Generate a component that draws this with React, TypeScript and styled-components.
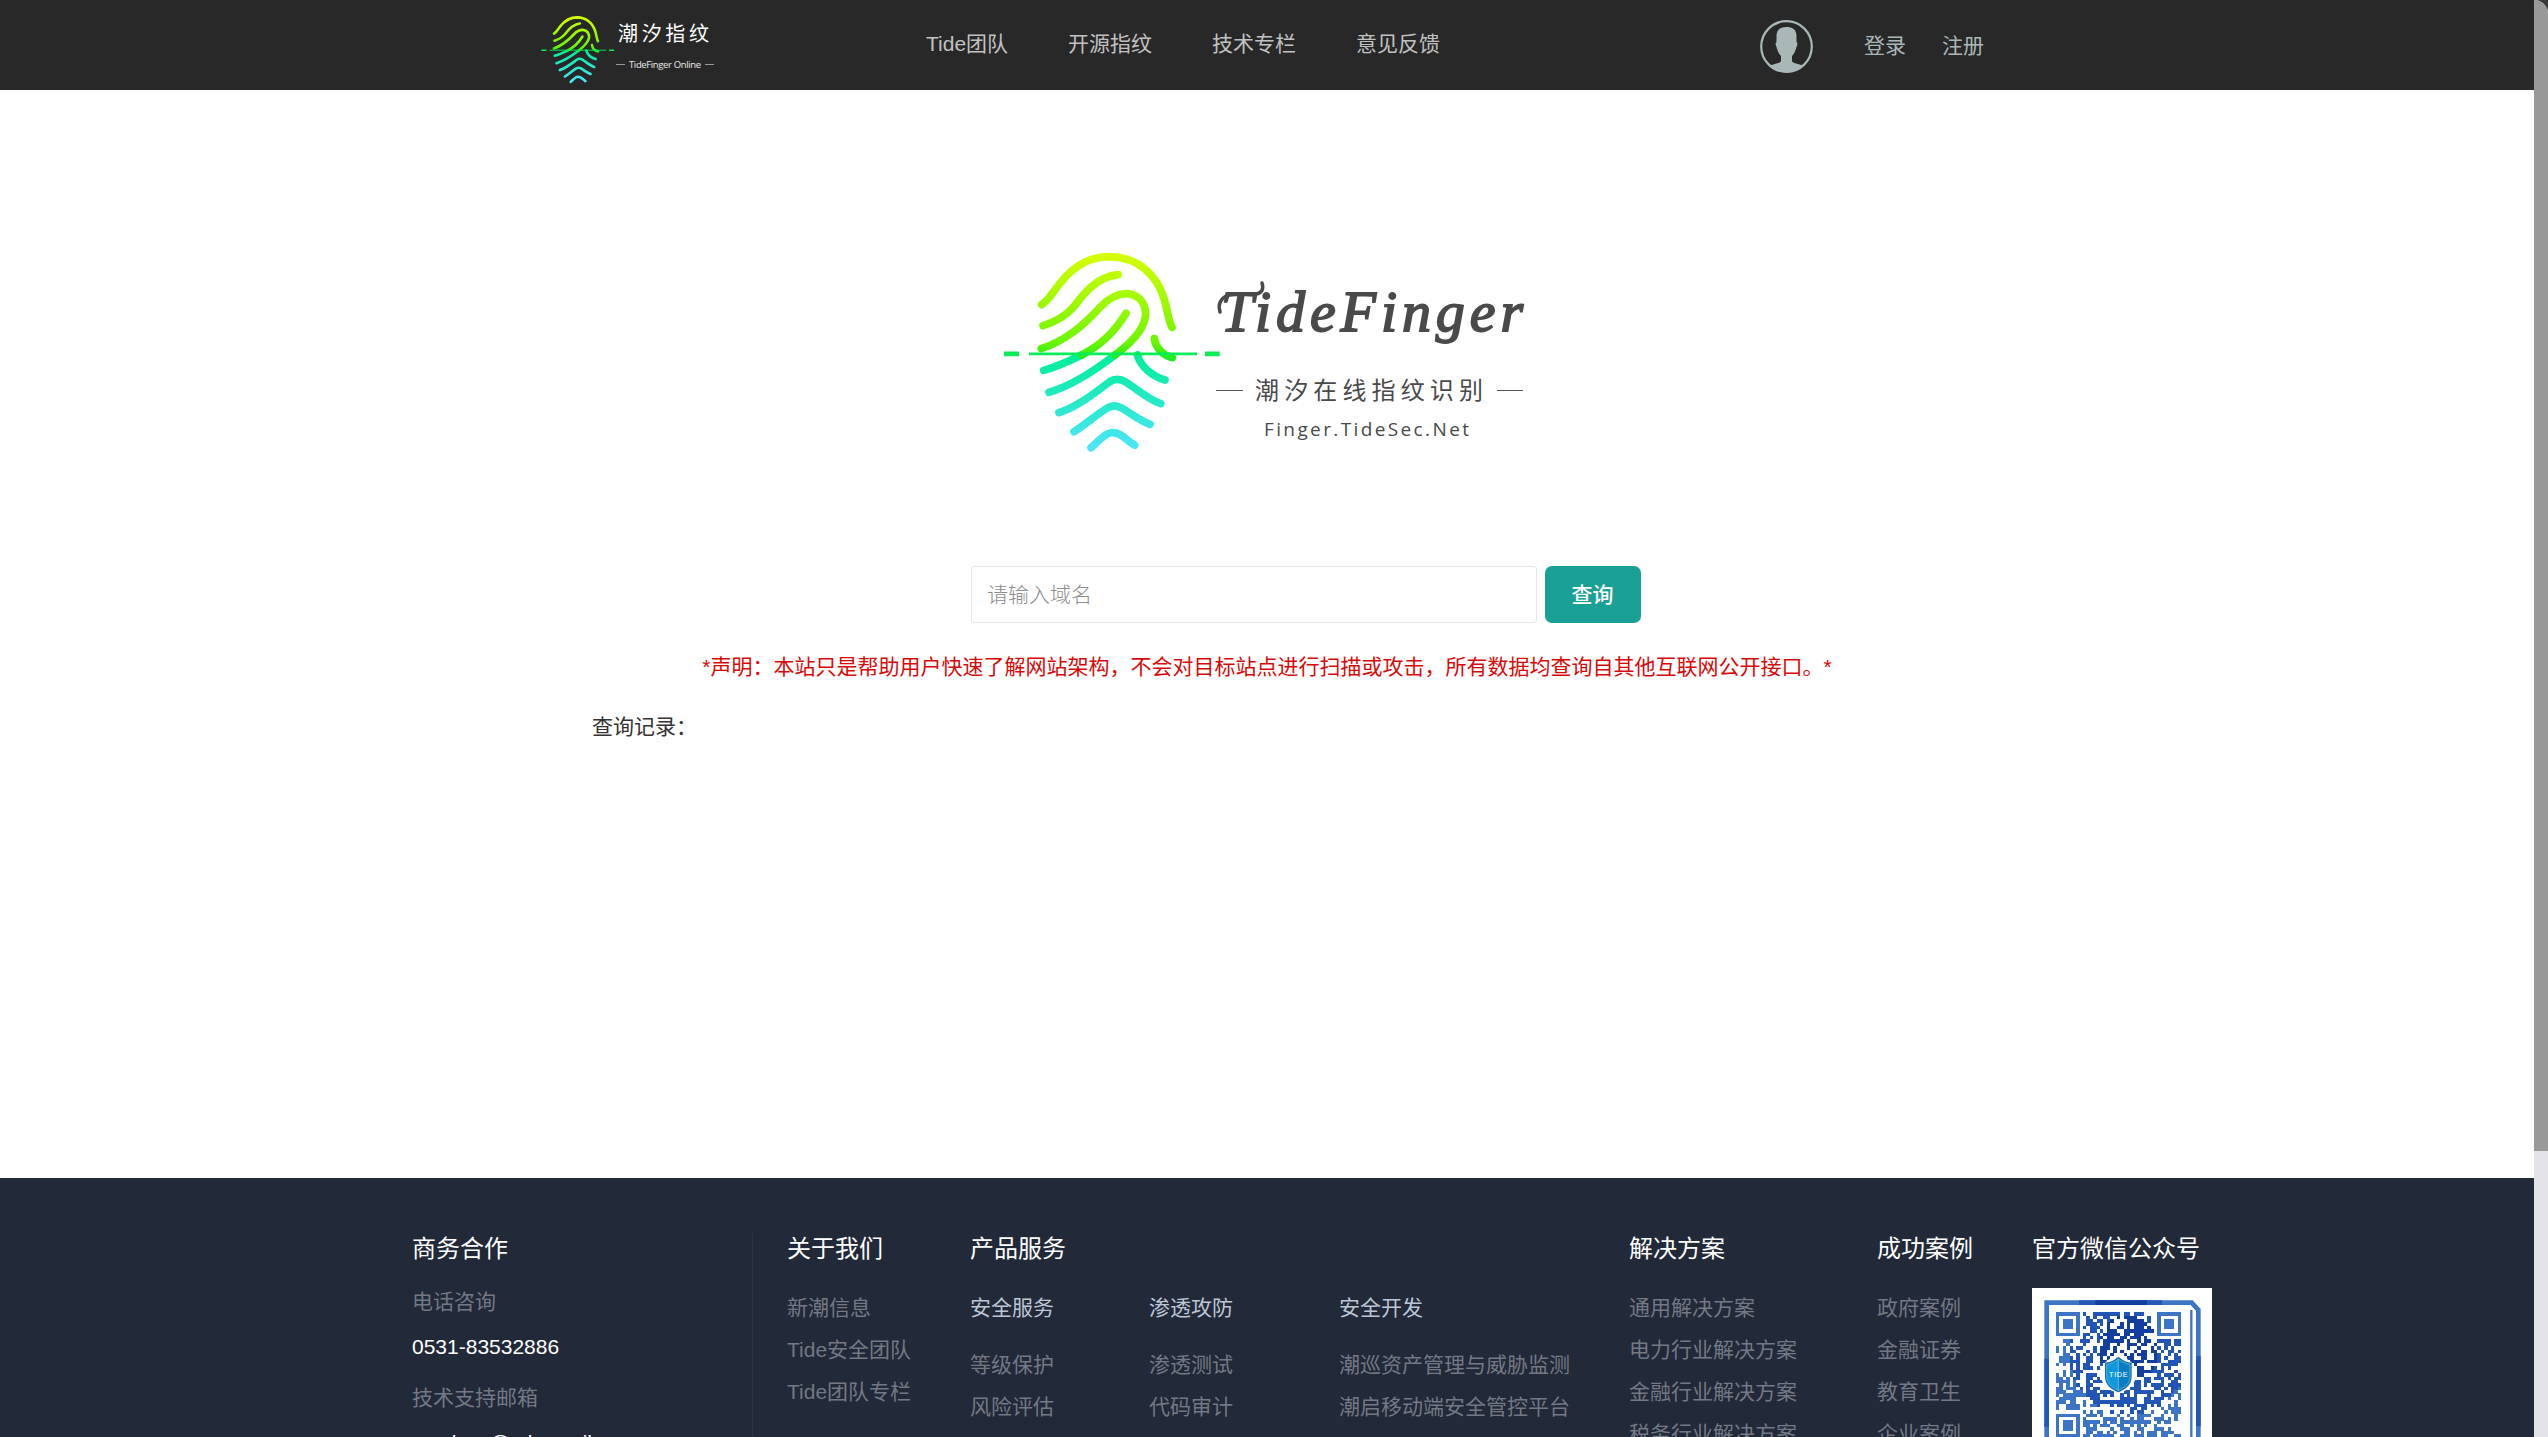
import React from "react";
import styled, { createGlobalStyle } from "styled-components";

const GlobalStyle = createGlobalStyle`
  *, *::before, *::after { box-sizing: border-box; }
  html, body { margin: 0; padding: 0; overflow: hidden; background: #3a3a3a; }
  body {
    font-family: "Liberation Sans", Arial, "Noto Sans CJK SC", sans-serif;
    font-size: 21px;
    color: #333;
  }
  h3, h4, p, ul { margin: 0; padding: 0; font-weight: 400; }
  ul { list-style: none; }
  a { color: inherit; text-decoration: none; }
`;

const Window = styled.div`
  display: flex;
  width: 2548px;
  height: 1437px;
  overflow: hidden;
`;

const Page = styled.div`
  display: flex;
  flex-direction: column;
  width: 2534px;
  height: 100%;
  background: #fff;
`;

const ScrollTrack = styled.div`
  width: 14px;
  height: 100%;
  background: #e3e3e8;
  border-top-right-radius: 14px;
  overflow: hidden;
`;

const ScrollThumb = styled.div`
  height: 1151px;
  background: #999;
`;

const Header = styled.header`
  display: flex;
  align-items: center;
  flex: none;
  height: 90px;
  padding-left: 540px;
  background: #282828;
`;

const HeaderLogo = styled.a`
  display: block;
  width: 178px;
  height: 90px;
  svg { display: block; }
`;

const Nav = styled.nav`
  display: flex;
  gap: 60px;
  margin-left: 208px;
  height: 90px;
  line-height: 88px;
  color: #c1c1c1;
`;

const Account = styled.div`
  display: flex;
  align-items: center;
  height: 90px;
  margin-left: 320px;
  line-height: 94px;
  color: #a9b7b7;
  svg { display: block; margin-right: 51px; margin-top: 2px; }
  a { padding-top: 2px; line-height: 90px; }
  a + a { margin-left: 36px; }
`;

const Main = styled.main`
  flex: none;
  height: 1088px;
  padding-top: 140px;
`;

const HeroLogo = styled.div`
  width: 580px;
  height: 240px;
  margin-left: 980px;
  svg { display: block; }
`;

const SearchForm = styled.form`
  display: flex;
  gap: 8px;
  margin: 96px 0 0 971px;
`;

const SearchInput = styled.input`
  width: 566px;
  height: 57px;
  padding: 1px 15px 0;
  border: 1px solid #e6e6e6;
  border-radius: 3px;
  background: #fff;
  font: inherit;
  outline: none;
  &::placeholder { color: #8c8c8c; opacity: 1; font-weight: 300; }
`;

const SearchButton = styled.button`
  width: 96px;
  height: 57px;
  padding: 0 1px 3px 0;
  border: 0;
  border-radius: 7px;
  background: #1aa094;
  color: #fff;
  font: inherit;
  font-weight: 500;
`;

const Notice = styled.p`
  margin-top: 29px;
  line-height: 30px;
  text-align: center;
  color: #d90808;
`;

const HistoryTitle = styled.p`
  margin: 30px 0 0 592px;
  line-height: 30px;
  color: #333;
`;

const Footer = styled.footer`
  display: flex;
  flex: 1;
  min-height: 0;
  overflow: hidden;
  padding: 55px 0 0 412px;
  background: #222938;
`;

const Contact = styled.section`
  width: 341px;
  height: 260px;
  flex: none;
  border-right: 1px solid #2f3544;
`;

const Column = styled.section<{ $w: number; $gap?: number }>`
  flex: none;
  width: ${(p) => p.$w}px;
  margin-left: ${(p) => p.$gap ?? 0}px;
`;

const ColumnTitle = styled.h3`
  height: 32px;
  line-height: 32px;
  font-size: 24px;
  color: #fff;
  white-space: nowrap;
`;

const ContactLabel = styled.p<{ $top: number }>`
  margin-top: ${(p) => p.$top}px;
  line-height: 30px;
  color: #737884;
`;

const ContactValue = styled.p`
  margin-top: 15px;
  line-height: 30px;
  color: #fff;
`;

const LinkList = styled.ul<{ $top: number }>`
  margin-top: ${(p) => p.$top}px;
  line-height: 42px;
  color: #737884;
  white-space: nowrap;
`;

const Services = styled.div`
  display: grid;
  grid-template-columns: 179px 190px 260px;
  margin-top: 22px;
`;

const ServiceTitle = styled.h4`
  line-height: 42px;
  color: #bcc6d5;
`;

const QrCard = styled.div`
  width: 180px;
  height: 180px;
  margin-top: 23px;
  background: #fff;
  svg { display: block; }
`;

const upperRidges = [
  "M185 224 C212 205 215 190 240 160 C290 96 340 80 392 80 C475 82 530 135 552 205 C562 238 566 275 576 292",
  "M189 287 C225 276 260 255 280 232 C310 192 350 140 414 134",
  "M184 356 C260 330 310 286 360 232 C390 200 415 190 442 191 C482 195 500 225 496 262 C488 305 450 340 405 375",
  "M438 250 C405 305 365 345 305 375",
  "M523 326 C526 350 545 375 577 383",
];
const lowerRidges = [
  "M305 375 C270 392 225 412 191 421",
  "M405 375 C340 425 265 470 207 487",
  "M472 375 C482 410 515 438 555 450",
  "M237 548 C300 526 350 484 388 456 Q411 440 437 456 C475 480 505 508 542 521",
  "M282 605 C325 577 350 553 382 534 Q403 521 425 534 C455 552 480 572 510 583",
  "M333 653 C350 638 362 624 378 614 Q398 602 420 614 C435 622 448 636 464 646",
];

function FingerprintMark({ id }: { id: string }) {
  return (
    <g fill="none" strokeLinecap="round" strokeWidth="23">
      <defs>
        <linearGradient id={id + "a"} gradientUnits="userSpaceOnUse" x1="0" y1="70" x2="0" y2="385">
          <stop offset="0" stopColor="#d8ff00" />
          <stop offset="0.85" stopColor="#6cf500" />
          <stop offset="1" stopColor="#1aef20" />
        </linearGradient>
        <linearGradient id={id + "b"} gradientUnits="userSpaceOnUse" x1="0" y1="375" x2="0" y2="655">
          <stop offset="0" stopColor="#00ee98" />
          <stop offset="1" stopColor="#4be6fa" />
        </linearGradient>
      </defs>
      {lowerRidges.map((d) => <path key={d} d={d} stroke={`url(#${id}b)`} />)}
      {upperRidges.map((d) => <path key={d} d={d} stroke={`url(#${id}a)`} />)}
      <path d="M147 371.500H651" stroke="#08ec5a" strokeWidth="8" strokeLinecap="butt" />
      <path d="M72 371.500H117M675 371.500H719" stroke="#08ec5a" strokeWidth="14" strokeLinecap="butt" />
    </g>
  );
}

function SmallLogo() {
  return (
    <svg width="178" height="90" viewBox="0 0 178 90">
      <g transform="translate(-6.800 8.400) scale(0.1125)">
        <FingerprintMark id="s" />
      </g>
      <g fill="#fff" fontFamily='"Noto Sans CJK SC", sans-serif'>
        <text x="78" y="41" fontSize="20" textLength="91">潮汐指纹</text>
        <text x="89" y="68" fontSize="9.500" fontFamily='"Open Sans", sans-serif' textLength="72" fill="#e8e8e8">TideFinger Online</text>
      </g>
      <path d="M76 64.500h9M165 64.500h9" stroke="#999" />
    </svg>
  );
}

function BigLogo() {
  return (
    <svg width="580" height="240" viewBox="0 0 580 240">
      <g transform="scale(0.33333)">
        <FingerprintMark id="h" />
      </g>
      <g fill="#4a4a4a">
        <text x="241" y="100.500" stroke="#4a4a4a" strokeWidth="1.800" fontFamily='"Liberation Serif", serif' fontStyle="italic" fontSize="58" textLength="302">TideFinger</text>
        <path d="M254 64 C243 65 237 72 240 82 M276 64 C282 63 284 59 282 53" fill="none" stroke="#4a4a4a" strokeWidth="3.500" strokeLinecap="round" />
        <text x="275" y="169" fontFamily='"Noto Sans CJK SC", sans-serif' fontSize="24" textLength="228">潮汐在线指纹识别</text>
        <text x="284" y="206" fontFamily='"Open Sans", sans-serif' fontSize="19" textLength="205">Finger.TideSec.Net</text>
      </g>
      <path d="M236 160.500h27M517 160.500h26" stroke="#555" />
    </svg>
  );
}

function Avatar() {
  return (
    <svg width="53" height="53" viewBox="0 0 53 53">
      <defs>
        <clipPath id="avatarClip"><circle cx="26.500" cy="26.500" r="26" /></clipPath>
      </defs>
      <circle cx="26.500" cy="26.500" r="25.300" fill="none" stroke="#a9b7b7" strokeWidth="2.200" />
      <path
        clipPath="url(#avatarClip)"
        fill="#a9b7b7"
        d="M16.500 16 C16.500 9 21 7 26.500 7 C32 7 36.500 9 36.500 16 V22 C38 23 37.500 25 36.500 27 C35.500 31 34 34 32 36 V41 C33 44 40 43 44 47 V53 H9 V47 C13 43 20 44 21 41 V36 C19 34 17.500 31 16.500 27 C15.500 25 15 23 16.500 22 Z"
      />
    </svg>
  );
}

const QR_SIZE = 37;
const finders = [[0, 0], [30, 0], [0, 30]];

function moduleColor(x: number, y: number) {
  const d = Math.hypot(x - 21, (y - 10) * 0.9);
  if (d < 9) return "#123f9f";
  if (d < 18) return "#2155b6";
  return "#3c74c6";
}

function buildModules() {
  const cells: { x: number; y: number }[] = [];
  let seed = 20197;
  for (let y = 0; y < QR_SIZE; y++) {
    for (let x = 0; x < QR_SIZE; x++) {
      seed = (seed * 1103515245 + 12345) % 2147483648;
      const on = seed / 2147483648 < 0.53;
      const inFinder = finders.some(([fx, fy]) => x >= fx - 1 && x <= fx + 7 && y >= fy - 1 && y <= fy + 7);
      const inBadge = Math.hypot(x - 18, y - 18) < 5.2;
      if (on && !inFinder && !inBadge) cells.push({ x, y });
    }
  }
  return cells;
}

function QrCode() {
  return (
    <svg width="180" height="180" viewBox="0 0 540 540">
      <path d="M44 540V44H479L499 66V540" fill="none" stroke="#3c74c6" strokeWidth="14" />
      <path d="M141 44H390" stroke="#2358b8" strokeWidth="14" />
      <path d="M190 44H345" stroke="#123f9f" strokeWidth="14" />
      <path d="M44 212V416M499 205V415" stroke="#2155b6" strokeWidth="14" />
      <path d="M478 66V540" stroke="#3c74c6" strokeWidth="7" />
      <g transform="translate(72 73) scale(10.140)" shapeRendering="crispEdges">
        {buildModules().map(({ x, y }) => (
          <rect key={x + "-" + y} x={x} y={y} width="1.020" height="1.020" fill={moduleColor(x, y)} />
        ))}
        {finders.map(([x, y]) => (
          <g key={x + "f" + y}>
            <rect x={x + 0.5} y={y + 0.5} width="6" height="6" fill="none" stroke="#3c74c6" />
            <rect x={x + 2} y={y + 2} width="3" height="3" fill="#3c74c6" />
          </g>
        ))}
      </g>
      <circle cx="259" cy="259" r="53" fill="#fff" />
      <path d="M259 206C246 218 232 223 219 224V266C219 290 238 304 259 313C280 304 299 290 299 266V224C286 223 272 218 259 206Z" fill="#0d6fae" />
      <path d="M259 213C248 222 236 228 224 229V266C224 287 241 299 259 307Z" fill="#1098da" stroke="#7cc4ea" strokeWidth="2" />
      <path d="M259 213C270 222 282 228 294 229V266C294 287 277 299 259 307Z" fill="#0a7ec2" stroke="#7cc4ea" strokeWidth="2" />
      <text x="259" y="267" textAnchor="middle" fontFamily='"Liberation Sans", sans-serif' fontSize="22" textLength="56" fill="#fff">TIDE</text>
    </svg>
  );
}

const navItems = ["Tide团队", "开源指纹", "技术专栏", "意见反馈"];
const services = [
  { title: "安全服务", items: ["等级保护", "风险评估"] },
  { title: "渗透攻防", items: ["渗透测试", "代码审计"] },
  { title: "安全开发", items: ["潮巡资产管理与威胁监测", "潮启移动端安全管控平台"] },
];

function Links({ items, top }: { items: string[]; top: number }) {
  return (
    <LinkList $top={top}>
      {items.map((t) => <li key={t}><a>{t}</a></li>)}
    </LinkList>
  );
}

export default function App() {
  return (
    <Window>
      <GlobalStyle />
      <Page>
        <Header>
          <HeaderLogo><SmallLogo /></HeaderLogo>
          <Nav>{navItems.map((t) => <a key={t}>{t}</a>)}</Nav>
          <Account>
            <Avatar />
            <a>登录</a>
            <a>注册</a>
          </Account>
        </Header>
        <Main>
          <HeroLogo><BigLogo /></HeroLogo>
          <SearchForm>
            <SearchInput placeholder="请输入域名" />
            <SearchButton type="button">查询</SearchButton>
          </SearchForm>
          <Notice>*声明：本站只是帮助用户快速了解网站架构，不会对目标站点进行扫描或攻击，所有数据均查询自其他互联网公开接口。*</Notice>
          <HistoryTitle>查询记录：</HistoryTitle>
        </Main>
        <Footer>
          <Contact>
            <ColumnTitle>商务合作</ColumnTitle>
            <ContactLabel $top={22}>电话咨询</ContactLabel>
            <ContactValue>0531-83532886</ContactValue>
            <ContactLabel $top={21}>技术支持邮箱</ContactLabel>
            <ContactValue>secdesc@sdxcmail.com</ContactValue>
          </Contact>
          <Column $w={183} $gap={34}>
            <ColumnTitle>关于我们</ColumnTitle>
            <Links top={22} items={["新潮信息", "Tide安全团队", "Tide团队专栏"]} />
          </Column>
          <Column $w={659}>
            <ColumnTitle>产品服务</ColumnTitle>
            <Services>
              {services.map((s) => (
                <div key={s.title}>
                  <ServiceTitle>{s.title}</ServiceTitle>
                  <Links top={15} items={s.items} />
                </div>
              ))}
            </Services>
          </Column>
          <Column $w={248}>
            <ColumnTitle>解决方案</ColumnTitle>
            <Links top={22} items={["通用解决方案", "电力行业解决方案", "金融行业解决方案", "税务行业解决方案"]} />
          </Column>
          <Column $w={155}>
            <ColumnTitle>成功案例</ColumnTitle>
            <Links top={22} items={["政府案例", "金融证券", "教育卫生", "企业案例"]} />
          </Column>
          <Column $w={180}>
            <ColumnTitle>官方微信公众号</ColumnTitle>
            <QrCard><QrCode /></QrCard>
          </Column>
        </Footer>
      </Page>
      <ScrollTrack><ScrollThumb /></ScrollTrack>
    </Window>
  );
}
